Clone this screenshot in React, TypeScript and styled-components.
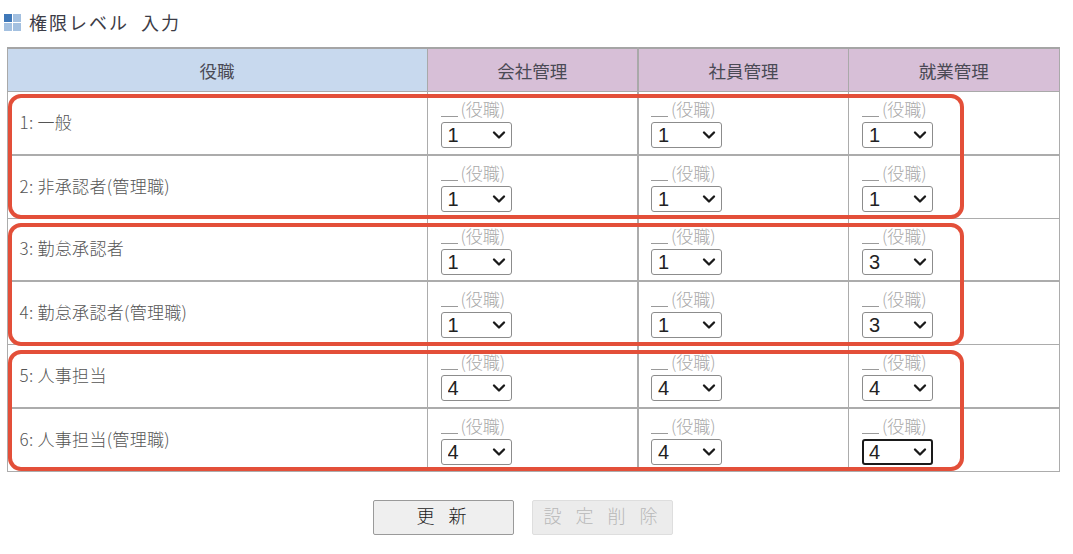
import React from "react";
import styled, { createGlobalStyle } from "styled-components";
import { ChevronDown } from "lucide-react";

const GlobalStyle = createGlobalStyle`
  html, body {
    margin: 0;
    padding: 0;
    background: #fff;
  }
  body {
    font-family: "Noto Sans CJK JP", "Liberation Sans", sans-serif;
    color: #444;
  }
`;

const Page = styled.div`
  position: relative;
  width: 1073px;
  height: 554px;
  overflow: hidden;
  padding: 10px 13px 0 4px;
  box-sizing: border-box;
`;

const Title = styled.h1`
  display: flex;
  align-items: center;
  gap: 8px;
  height: 24px;
  margin: 0 0 13px;
  font-size: 18px;
  font-weight: 400;
  line-height: 24px;
  letter-spacing: 2px;
  word-spacing: 6px;
  color: #3c3c46;
`;

const TitleIcon = styled.span`
  display: grid;
  grid-template-columns: 8px 8px;
  grid-template-rows: 8px 8px;
  gap: 1px;

  i {
    background: #a3c0e0;
  }
  i:first-child {
    background: #3f78b8;
  }
`;

const Table = styled.table`
  width: 1052px;
  margin-left: 2.5px;
  border-collapse: collapse;
  table-layout: fixed;
  border-top: 2px solid #a5a5a5;
`;

const HeadCell = styled.th<{ $role?: boolean }>`
  height: 42px;
  padding: 0;
  border: 1px solid #a9a9a9;
  background: ${(p) => (p.$role ? "#c8d9ee" : "#d7bfd7")};
  color: #4a4a55;
  font-size: 17.5px;
  font-weight: 400;
  text-align: center;

  &:nth-child(3) {
    border-left-width: 2px;
  }
`;

const Row = styled.tr`
  height: 63.3px;

  &:nth-child(odd) td {
    border-bottom-width: 2px;
  }
`;

const NameCell = styled.td`
  padding: 0 0 3px 12px;
  border: 1px solid #acacac;
  font-size: 17px;
  font-weight: 300;
  letter-spacing: 0.3px;
  color: #555;
  vertical-align: middle;
`;

const LevelCell = styled.td`
  padding: 3px 0 0 13px;
  border: 1px solid #acacac;
  vertical-align: top;

  &:nth-child(3) {
    padding-left: 12px;
    border-left-width: 2px;
  }
`;

const Label = styled.div`
  display: flex;
  align-items: flex-start;
  height: 27px;
  font-size: 17px;
  font-weight: 300;
  line-height: 27px;
  color: #a8a8a8;
`;

const Blank = styled.span`
  width: 17px;
  height: 21px;
  border-bottom: 1px solid #9a9a9a;
  margin-right: 3px;
`;

const SelectBox = styled.div`
  position: relative;
  width: 71px;
  height: 26px;

  svg {
    position: absolute;
    top: 3px;
    right: 3px;
    color: #1a1a1a;
    pointer-events: none;
  }
`;

const LevelSelect = styled.select<{ $focused?: boolean }>`
  display: block;
  width: 100%;
  height: 100%;
  padding: 0 0 0 ${(p) => (p.$focused ? 5 : 6)}px;
  box-sizing: border-box;
  appearance: none;
  border: ${(p) => (p.$focused ? "2px solid #1a1a1a" : "1px solid #8c8c8c")};
  border-radius: 3px;
  outline: none;
  background: #fff;
  color: #222;
  font-family: "Liberation Sans", sans-serif;
  font-size: 20px;
`;

const Actions = styled.div`
  display: flex;
  gap: 18px;
  margin: 28px 0 0 369px;
`;

const ActionButton = styled.button`
  width: 141px;
  height: 35px;
  padding: 0 0 5px;
  border: 1px solid #9a9a9a;
  border-radius: 2px;
  background: #efefef;
  color: #222;
  font-family: inherit;
  font-size: 18px;
  font-weight: 300;
  letter-spacing: 14px;
  text-indent: 10px;
  white-space: nowrap;

  &:disabled {
    border-color: #dedede;
    background: #ececec;
    color: #b8b8b8;
  }
`;

const GroupFrame = styled.div<{ $top: number; $height: number }>`
  position: absolute;
  left: 8px;
  top: ${(p) => p.$top}px;
  width: 956px;
  height: ${(p) => p.$height}px;
  box-sizing: border-box;
  border: 4px solid #e34f39;
  border-radius: 13px;
  pointer-events: none;
`;

const levelNames = ["会社管理", "社員管理", "就業管理"];

const rows = [
  { name: "1: 一般", levels: ["1", "1", "1"] },
  { name: "2: 非承認者(管理職)", levels: ["1", "1", "1"] },
  { name: "3: 勤怠承認者", levels: ["1", "1", "3"] },
  { name: "4: 勤怠承認者(管理職)", levels: ["1", "1", "3"] },
  { name: "5: 人事担当", levels: ["4", "4", "4"] },
  { name: "6: 人事担当(管理職)", levels: ["4", "4", "4"] },
];

const frames = [
  { top: 94, height: 125 },
  { top: 223, height: 123 },
  { top: 350, height: 121 },
];

export default function App() {
  return (
    <Page>
      <GlobalStyle />
      <Title>
        <TitleIcon>
          <i />
          <i />
          <i />
          <i />
        </TitleIcon>
        権限レベル 入力
      </Title>
      <Table>
        <colgroup>
          <col style={{ width: 420 }} />
          <col style={{ width: 211 }} />
          <col style={{ width: 210.5 }} />
          <col style={{ width: 210.5 }} />
        </colgroup>
        <thead>
          <tr>
            <HeadCell $role>役職</HeadCell>
            {levelNames.map((n) => (
              <HeadCell key={n}>{n}</HeadCell>
            ))}
          </tr>
        </thead>
        <tbody>
          {rows.map((r, i) => (
            <Row key={r.name}>
              <NameCell>{r.name}</NameCell>
              {r.levels.map((v, j) => (
                <LevelCell key={j}>
                  <Label>
                    <Blank />
                    (役職)
                  </Label>
                  <SelectBox>
                    <LevelSelect defaultValue={v} $focused={i === 5 && j === 2}>
                      {["1", "2", "3", "4", "5"].map((o) => (
                        <option key={o} value={o}>
                          {o}
                        </option>
                      ))}
                    </LevelSelect>
                    <ChevronDown size={20} strokeWidth={2.8} />
                  </SelectBox>
                </LevelCell>
              ))}
            </Row>
          ))}
        </tbody>
      </Table>
      <Actions>
        <ActionButton>更新</ActionButton>
        <ActionButton disabled>設定削除</ActionButton>
      </Actions>
      {frames.map((f) => (
        <GroupFrame key={f.top} $top={f.top} $height={f.height} />
      ))}
    </Page>
  );
}
